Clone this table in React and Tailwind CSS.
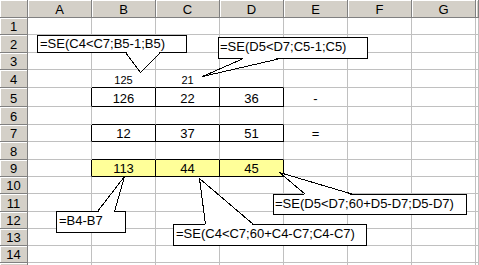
import React from 'react'

const COLS = ['A', 'B', 'C', 'D', 'E', 'F', 'G', '']
const ROWS = Array.from({ length: 15 }, (_, i) => i + 1)

const VALUES = {
  '4-1': '125', '4-2': '21',
  '5-1': '126', '5-2': '22', '5-3': '36', '5-4': '-',
  '7-1': '12', '7-2': '37', '7-3': '51', '7-4': '=',
  '9-1': '113', '9-2': '44', '9-3': '45',
}

const boxed = (r, c) => [5, 7, 9].includes(r) && c >= 1 && c <= 3

const Cell = ({ r, c }) => {
  const right = boxed(r, c) || boxed(r, c + 1) ? 'border-r-black' : 'border-r-[#c0c0c0]'
  const bottom = boxed(r, c) || boxed(r + 1, c) ? 'border-b-black' : 'border-b-[#c0c0c0]'
  const fill = r === 9 && boxed(r, c) ? 'bg-[#ffff99]' : 'bg-white'
  const small = r === 4
  return (
    <div className={`flex items-end justify-center border-r border-b ${right} ${bottom} ${fill}`}>
      <span className={small ? 'text-[11px] leading-[13px]' : 'text-[13px] leading-[15px]'}>
        {VALUES[`${r}-${c}`] || ''}
      </span>
    </div>
  )
}

const Header = ({ children }) => (
  <div className="flex items-end justify-center bg-[#d4d0c8] border-r border-b border-[#808080] shadow-[inset_1px_1px_0_#ffffff] text-[13px] leading-[15px]">
    {children}
  </div>
)

export default function App() {
  return (
    <div className="relative w-[479px] h-[265px] overflow-hidden bg-white text-black font-['Liberation_Sans',Arial,sans-serif]">
      {/* sheet */}
      <div className="grid h-full grid-cols-[28px_repeat(7,64px)_1fr] grid-rows-[18px_17px_18px_17px_18px_19px_18px_17px_18px_17px_17px_18px_17px_17px_17px_17px]">
        <Header />
        {COLS.map((col, i) => (
          <Header key={i}>{col}</Header>
        ))}
        {ROWS.map(r => (
          <React.Fragment key={r}>
            {/* last row only peeks in at the bottom edge, its label stays hidden */}
            <Header>{r < 15 ? r : ''}</Header>
            {COLS.map((_, c) => (
              <Cell key={c} r={r} c={c} />
            ))}
          </React.Fragment>
        ))}
      </div>

      {/* callouts */}
      <div className="absolute left-[37px] top-[35px] w-[150px] h-[18px] border border-black bg-white pl-[2px] text-[13px] leading-[15px] whitespace-nowrap">
        =SE(C4&lt;C7;B5-1;B5)
      </div>
      <div className="absolute left-[218px] top-[37px] w-[150px] h-[22px] border border-black bg-white pl-[1px] pt-[1px] text-[13px] leading-[15px] whitespace-nowrap">
        =SE(D5&lt;D7;C5-1;C5)
      </div>
      <div className="absolute left-[56px] top-[211px] w-[70px] h-[22px] border border-black bg-white pl-[2px] pt-[1px] text-[13px] leading-[15px] whitespace-nowrap">
        =B4-B7
      </div>
      <div className="absolute left-[173px] top-[224px] w-[194px] h-[22px] border border-black bg-white pl-[2px] pt-[1px] text-[13px] leading-[15px] whitespace-nowrap">
        =SE(C4&lt;C7;60+C4-C7;C4-C7)
      </div>
      <div className="absolute left-[273px] top-[194px] w-[194px] h-[21px] border border-black bg-white pl-[1px] pt-[1px] text-[13px] leading-[15px] whitespace-nowrap">
        =SE(D5&lt;D7;60+D5-D7;D5-D7)
      </div>

      {/* wedges */}
      <svg className="absolute inset-0 pointer-events-none" width="479" height="265" shapeRendering="crispEdges">
        <g fill="#ffffff" stroke="none">
          <polygon points="126,51.6 140.5,72 160,51.6" />
          <polygon points="244,57.6 202.5,76 280,57.6" />
          <polygon points="98,212.4 124.5,177 114,212.4" />
          <polygon points="205.5,225.4 199.5,178.5 253,225.4" />
          <polygon points="305.5,195.4 279.5,172.5 353,195.4" />
        </g>
        <g fill="none" stroke="#000000" strokeWidth="1">
          <polyline points="125.5,52.5 140.5,72.5 160.5,52.5" />
          <polyline points="243.5,58.5 202.5,76.5 280.5,58.5" />
          <polyline points="97.5,211.5 124.5,176.5 114.5,211.5" />
          <polyline points="205.5,224.5 199.5,178.5 253.5,224.5" />
          <polyline points="305.5,194.5 279.5,172.5 353.5,194.5" />
        </g>
      </svg>
    </div>
  )
}
